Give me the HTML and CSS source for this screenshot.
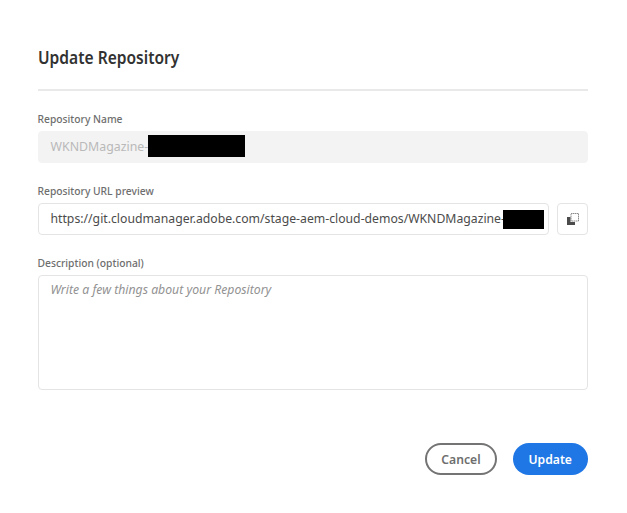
FILE: index.html
```html
<!DOCTYPE html>
<html lang="en">
<head>
<meta charset="utf-8">
<title>Update Repository</title>
<link rel="stylesheet" href="styles.css">
</head>
<body>
<main class="dialog">
  <h1 class="title"><span>Update Repository</span></h1>
  <section class="field">
    <div class="label"><span>Repository Name</span></div>
    <div class="input disabled"><span class="v-name">WKNDMagazine-</span><i class="redacted large"></i></div>
  </section>
  <section class="field">
    <div class="label"><span>Repository URL preview</span></div>
    <div class="url-row">
      <div class="input url"><span class="v-url">https://git.cloudmanager.adobe.com/stage-aem-cloud-demos/WKNDMagazine-</span><i class="redacted small"></i></div>
      <button class="copy" aria-label="Copy">
        <svg width="14" height="14" viewBox="0 0 14 14">
          <path d="M1 5h3.5v5H9v3H1z" fill="#4b4b4b"/>
          <rect x="5" y="1.5" width="7.5" height="7.5" fill="#fff" stroke="#6e6e6e" stroke-width=".8" stroke-dasharray="1.5 .5"/>
        </svg>
      </button>
    </div>
  </section>
  <section class="field">
    <div class="label"><span>Description (optional)</span></div>
    <div class="input area"><span class="v-desc">Write a few things about your Repository</span></div>
  </section>
  <footer class="actions">
    <button class="button cancel"><span>Cancel</span></button>
    <button class="button update"><span>Update</span></button>
  </footer>
</main>
</body>
</html>
```
FILE: styles.css
```css
* { box-sizing: border-box; }
body { margin: 0; background: #fff; font-family: "Noto Sans", sans-serif; }
.dialog { width: 627px; height: 513px; padding: 46px 39px 0 38px; }
.title { margin: 0; height: 45px; border-bottom: 2px solid #e9e9e9; color: #323232; font-size: 17px; line-height: 24px; font-weight: 600; white-space: nowrap; }
.title span, .label span, .input span, .button span { display: inline-block; transform-origin: left center; }
.title span { transform: scaleX(.915); }
.field { margin-top: 20px; }
.label { height: 20px; color: #6e6e6e; font-size: 11px; line-height: 16px; font-weight: 500; white-space: nowrap; }
.label span { transform: translateX(-.5px) scaleX(.935); }
.input { display: flex; align-items: center; height: 32px; padding: 0 0 0 12px; border: 1px solid #e4e4e4; border-radius: 4px; color: #4b4b4b; font-size: 13px; line-height: 18px; white-space: nowrap; }
.input span { flex: none; transform: translate(-.5px, -1px) scaleX(.94); }
.disabled { border-color: #f3f3f3; background: #f3f3f3; color: #b9b9b9; }
.input .v-name { width: 97px; transform: translate(-.5px, -1px) scaleX(.95); }
.v-url { width: 452px; }
.redacted { position: relative; flex: none; background: #000; }
.large { width: 97px; height: 22px; margin-bottom: 2px; }
.small { width: 41px; height: 19px; }
.url-row { display: flex; gap: 8px; }
.url { width: 511px; }
.copy { display: flex; align-items: center; justify-content: center; width: 31px; height: 32px; padding: 0; border: 1px solid #e4e4e4; border-radius: 4px; background: #fff; }
.area { height: 115px; align-items: flex-start; padding-top: 4px; color: #929292; font-style: italic; }
.area .v-desc { transform: translateX(-.5px) scaleX(.942); }
.actions { display: flex; justify-content: flex-end; gap: 16px; margin-top: 53px; }
.button { height: 32px; padding: 0; border: 0; border-radius: 16px; font: 600 13px/18px "Noto Sans", sans-serif; }
.button span { transform: scaleX(.935); transform-origin: center; }
.cancel { width: 72px; border: 2px solid #747474; background: #fff; color: #6e6e6e; }
.update { width: 75px; background: #1f77e5; color: #fff; }
```
